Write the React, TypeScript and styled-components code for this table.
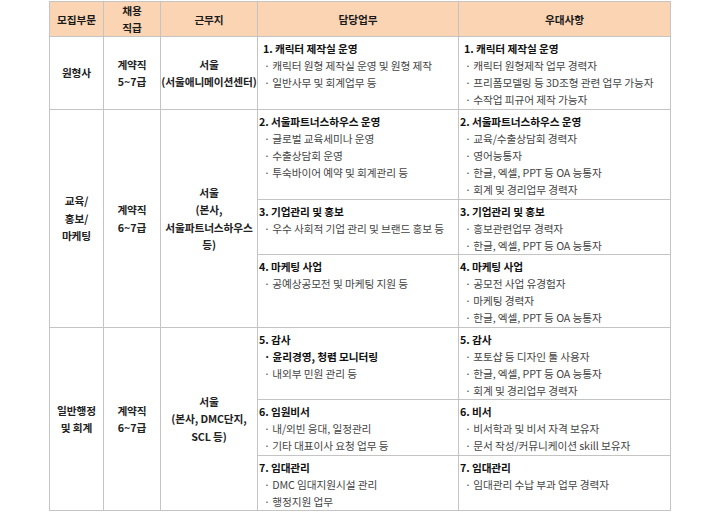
import React from 'react'
import styled, { createGlobalStyle } from 'styled-components'

const GlobalStyle = createGlobalStyle`
  html, body {
    margin: 0;
    padding: 0;
    background: #ffffff;
  }
  body {
    font-family: "Noto Sans CJK KR", "Noto Sans", sans-serif;
  }
`

interface Duty {
  title: string
  items: { text: string; strong?: boolean }[]
}

interface SubRow {
  height: number
  duty: Duty
  pref: Duty
}

interface Group {
  dept: string[]
  grade: string[]
  place: string[]
  rows: SubRow[]
}

const d = (title: string, ...items: (string | { text: string; strong?: boolean })[]): Duty => ({
  title,
  items: items.map(i => (typeof i === 'string' ? { text: i } : i)),
})

const groups: Group[] = [
  {
    dept: ['원형사'],
    grade: ['계약직', '5~7급'],
    place: ['서울', '(서울애니메이션센터)'],
    rows: [
      {
        height: 73,
        duty: d('1. 캐릭터 제작실 운영', '캐릭터 원형 제작실 운영 및 원형 제작', '일반사무 및 회계업무 등'),
        pref: d('1. 캐릭터 제작실 운영', '캐릭터 원형제작 업무 경력자', '프리폼모델링 등 3D조형 관련 업무 가능자', '수작업 피규어 제작 가능자'),
      },
    ],
  },
  {
    dept: ['교육/', '홍보/', '마케팅'],
    grade: ['계약직', '6~7급'],
    place: ['서울', '(본사,', '서울파트너스하우스', '등)'],
    rows: [
      {
        height: 90,
        duty: d('2. 서울파트너스하우스 운영', '글로벌 교육세미나 운영', '수출상담회 운영', '투숙바이어 예약 및 회계관리 등'),
        pref: d('2. 서울파트너스하우스 운영', '교육/수출상담회 경력자', '영어능통자', '한글, 엑셀, PPT 등 OA 능통자', '회계 및 경리업무 경력자'),
      },
      {
        height: 55,
        duty: d('3. 기업관리 및 홍보', '우수 사회적 기업 관리 및 브랜드 홍보 등'),
        pref: d('3. 기업관리 및 홍보', '홍보관련업무 경력자', '한글, 엑셀, PPT 등 OA 능통자'),
      },
      {
        height: 73,
        duty: d('4. 마케팅 사업', '공예상공모전 및 마케팅 지원 등'),
        pref: d('4. 마케팅 사업', '공모전 사업 유경험자', '마케팅 경력자', '한글, 엑셀, PPT 등 OA 능통자'),
      },
    ],
  },
  {
    dept: ['일반행정', '및 회계'],
    grade: ['계약직', '6~7급'],
    place: ['서울', '(본사, DMC단지,', 'SCL 등)'],
    rows: [
      {
        height: 72,
        duty: d('5. 감사', { text: '윤리경영, 청렴 모니터링', strong: true }, '내외부 민원 관리 등'),
        pref: d('5. 감사', '포토샵 등 디자인 툴 사용자', '한글, 엑셀, PPT 등 OA 능통자', '회계 및 경리업무 경력자'),
      },
      {
        height: 56,
        duty: d('6. 임원비서', '내/외빈 응대, 일정관리', '기타 대표이사 요청 업무 등'),
        pref: d('6. 비서', '비서학과 및 비서 자격 보유자', '문서 작성/커뮤니케이션 skill 보유자'),
      },
      {
        height: 53,
        duty: d('7. 임대관리', 'DMC 임대지원시설 관리', '행정지원 업무'),
        pref: d('7. 임대관리', '임대관리 수납 부과 업무 경력자'),
      },
    ],
  },
]

const Page = styled.div`
  padding: 1px 0 0 49px;
`

const Table = styled.table`
  border-collapse: collapse;
  table-layout: fixed;
  width: 621px;
  font-size: 10.7px;
  letter-spacing: -0.1px;
`

const HeadCell = styled.th`
  background: #fbd4b4;
  border: 1px solid #c4c4c4;
  color: #1a1a1a;
  font-weight: 700;
  font-size: 10.7px;
  line-height: 17px;
  text-align: center;
  vertical-align: middle;
  padding: 0;
`

const HeadRow = styled.tr`
  height: 35px;
`

const BodyRow = styled.tr<{ $h: number }>`
  height: ${p => p.$h}px;
`

const SideCell = styled.td`
  border: 1px solid #c4c4c4;
  color: #222;
  font-weight: 700;
  line-height: 17.5px;
  text-align: center;
  vertical-align: middle;
  padding: 0;
`

const TextCell = styled.td<{ $first: boolean }>`
  border: 1px solid #c4c4c4;
  vertical-align: top;
  padding: 3px 0 0 ${p => (p.$first ? 5 : 1)}px;
  line-height: 17px;
  white-space: nowrap;
  overflow: hidden;
`

const Title = styled.div`
  color: #111;
  font-weight: 700;
`

const Item = styled.div<{ $strong?: boolean; $first: boolean }>`
  color: ${p => (p.$strong ? '#111' : '#454545')};
  font-weight: ${p => (p.$strong ? 700 : 400)};
  padding-left: ${p => (p.$first ? 1 : 5)}px;
`

const Lines: React.FC<{ lines: string[] }> = ({ lines }) => (
  <>
    {lines.map((l, i) => (
      <div key={i}>{l}</div>
    ))}
  </>
)

const DutyBlock: React.FC<{ duty: Duty; first: boolean }> = ({ duty, first }) => (
  <TextCell $first={first}>
    <Title>{duty.title}</Title>
    {duty.items.map((it, i) => (
      <Item key={i} $strong={it.strong} $first={first}>
        · {it.text}
      </Item>
    ))}
  </TextCell>
)

const App: React.FC = () => {
  let isFirst = true

  return (
    <Page>
      <GlobalStyle />
      <Table>
        <colgroup>
          <col style={{ width: 54 }} />
          <col style={{ width: 57 }} />
          <col style={{ width: 97 }} />
          <col style={{ width: 201 }} />
          <col style={{ width: 212 }} />
        </colgroup>
        <thead>
          <HeadRow>
            <HeadCell>모집부문</HeadCell>
            <HeadCell>
              채용
              <br />
              직급
            </HeadCell>
            <HeadCell>근무지</HeadCell>
            <HeadCell>담당업무</HeadCell>
            <HeadCell>우대사항</HeadCell>
          </HeadRow>
        </thead>
        <tbody>
          {groups.map((g, gi) =>
            g.rows.map((r, ri) => {
              const first = isFirst
              isFirst = false
              return (
                <BodyRow key={`${gi}-${ri}`} $h={r.height}>
                  {ri === 0 && (
                    <>
                      <SideCell rowSpan={g.rows.length}>
                        <Lines lines={g.dept} />
                      </SideCell>
                      <SideCell rowSpan={g.rows.length}>
                        <Lines lines={g.grade} />
                      </SideCell>
                      <SideCell rowSpan={g.rows.length}>
                        <Lines lines={g.place} />
                      </SideCell>
                    </>
                  )}
                  <DutyBlock duty={r.duty} first={first} />
                  <DutyBlock duty={r.pref} first={first} />
                </BodyRow>
              )
            })
          )}
        </tbody>
      </Table>
    </Page>
  )
}

export default App
